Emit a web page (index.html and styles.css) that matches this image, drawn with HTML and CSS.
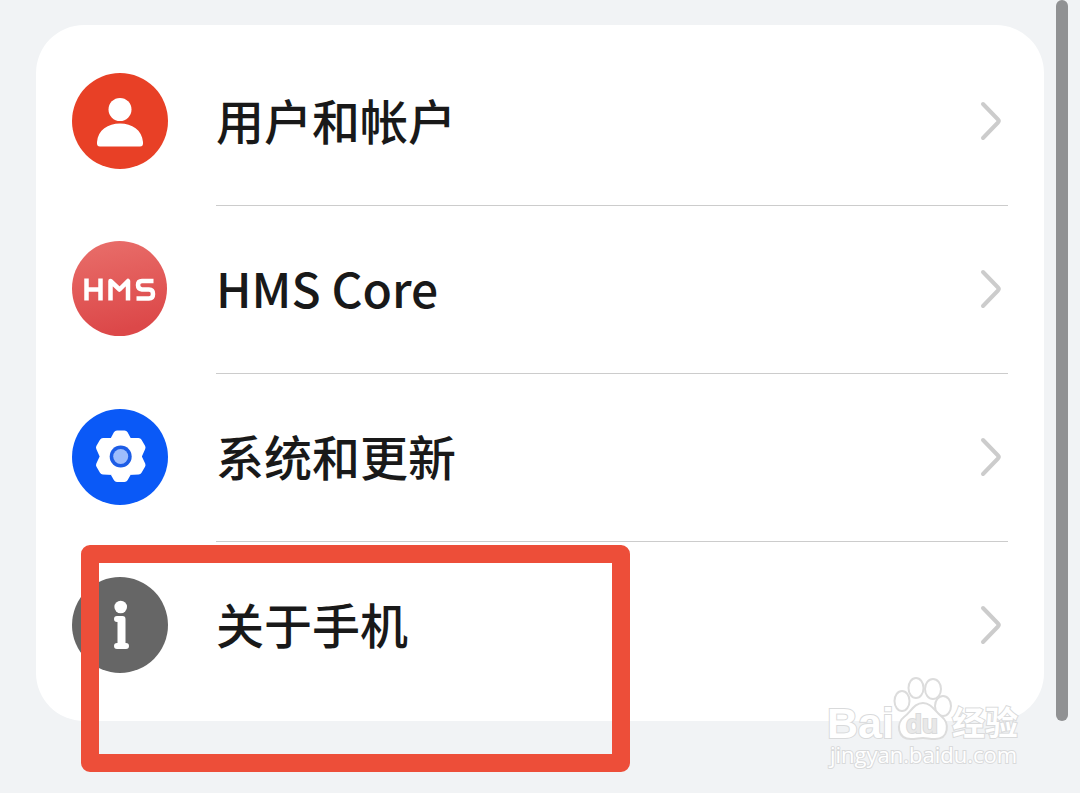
FILE: index.html
```html
<!DOCTYPE html>
<html lang="zh-CN">
<head>
    <meta charset="UTF-8">
    <meta name="viewport" content="width=device-width, initial-scale=1.0">
    <title>设置</title>
    <link rel="stylesheet" href="styles.css">
</head>
<body>
    <main class="page">
        <ul class="card">
            <li>
                <a class="row" href="#users">
                    <svg class="icon" viewBox="0 0 96 96" aria-hidden="true">
                        <circle cx="48" cy="48" r="48" fill="#e84026"/>
                        <circle cx="48" cy="36.500" r="11.500" fill="#fff"/>
                        <path d="M28 73.500Q24.500 73.500 25 69C26 57 36 50.500 48 50.500S70 57 71 69Q71.500 73.500 68 73.500Z" fill="#fff"/>
                    </svg>
                    <span class="label">用户和帐户</span>
                    <svg class="chevron" viewBox="0 0 24 42" aria-hidden="true"><path d="M4 4L19 19.500Q20.500 21 19 22.500L4 38"/></svg>
                </a>
            </li>
            <li>
                <a class="row" href="#hms">
                    <svg class="icon" viewBox="0 0 96 96" aria-hidden="true">
                        <defs>
                            <linearGradient id="hmsFill" x1="0" y1="0" x2="0.2" y2="1">
                                <stop offset="0" stop-color="#e96f6b"/>
                                <stop offset="1" stop-color="#dc4849"/>
                            </linearGradient>
                        </defs>
                        <circle cx="47.500" cy="47.500" r="47.500" fill="url(#hmsFill)"/>
                        <g fill="none" stroke="#fff" stroke-width="4.500">
                            <path d="M14.500 37.500V59.500M28.500 37.500V59.500M14 48.500H28"/>
                            <path d="M38.500 59.500V40L47.500 48.500L56 40V59.500" stroke-linejoin="round"/>
                            <path d="M81.500 40H70Q66 40 66 44T70 48.500H77Q81 48.500 81 53T77 57.500H64.500"/>
                        </g>
                    </svg>
                    <span class="label">HMS Core</span>
                    <svg class="chevron" viewBox="0 0 24 42" aria-hidden="true"><path d="M4 4L19 19.500Q20.500 21 19 22.500L4 38"/></svg>
                </a>
            </li>
            <li>
                <a class="row" href="#system">
                    <svg class="icon" viewBox="0 0 96 96" aria-hidden="true">
                        <circle cx="48" cy="48" r="48" fill="#0a59f7"/>
                        <path d="M45 25H52.500L56.500 32.500L66.500 32.500L70 38.500L66 47.500L70 56L66.500 62L56.500 62.500L52.500 69.500H45L41 62.500L31 62L27.500 56L31.500 47.500L27.500 38.500L31 32.500L41 32.500Z" fill="#fff" stroke="#fff" stroke-width="7" stroke-linejoin="round"/>
                        <circle cx="48.700" cy="47.500" r="11" fill="#1c5ce6"/>
                        <circle cx="48.700" cy="47.500" r="7.500" fill="#9dbcfc"/>
                    </svg>
                    <span class="label">系统和更新</span>
                    <svg class="chevron" viewBox="0 0 24 42" aria-hidden="true"><path d="M4 4L19 19.500Q20.500 21 19 22.500L4 38"/></svg>
                </a>
            </li>
            <li class="marked">
                <a class="row" href="#about">
                    <svg class="icon" viewBox="0 0 96 96" aria-hidden="true">
                        <circle cx="48" cy="48" r="48" fill="#666"/>
                        <circle cx="48.700" cy="30" r="6.300" fill="#fff"/>
                        <path d="M45 39H50.500Q53.500 39 53.500 42V66H54A3 3 0 0 1 54 72H45A3 3 0 0 1 45 66H45.500V45H45A3 3 0 0 1 45 39Z" fill="#fff"/>
                    </svg>
                    <span class="label">关于手机</span>
                    <svg class="chevron" viewBox="0 0 24 42" aria-hidden="true"><path d="M4 4L19 19.500Q20.500 21 19 22.500L4 38"/></svg>
                </a>
                <div class="highlight"></div>
            </li>
        </ul>
        <div class="scrollbar"></div>
        <svg class="watermark" viewBox="0 0 200 100" role="img" aria-label="Baidu 经验">
            <g class="paw">
                <ellipse cx="76" cy="28" rx="7.500" ry="10"/>
                <ellipse cx="90" cy="15" rx="7.500" ry="10"/>
                <ellipse cx="107" cy="16" rx="8" ry="10"/>
                <ellipse cx="117" cy="33" rx="8" ry="10"/>
                <path d="M97 30C105 30 109 38 115 43C124 50 123 66 109 66C103 66 101 65 97 65S90 66 85 66C71 66 70 50 78 44C85 39 88 30 97 30Z"/>
            </g>
            <text class="mark mark-bold" x="1" y="65" font-size="43">Bai</text>
            <text class="mark mark-du" x="80" y="60" font-size="26">du</text>
            <text class="mark mark-bold" x="126" y="62" font-size="33">经验</text>
            <text class="mark" x="4" y="90" font-size="22">jingyan.baidu.com</text>
        </svg>
    </main>
</body>
</html>
```

FILE: styles.css
```css
* {
    box-sizing: border-box;
}
body {
    margin: 0;
    background-color: #f1f3f5;
    color: #191919;
    font-family: "Noto Sans CJK SC", sans-serif;
}
.page {
    position: relative;
    min-height: 100vh;
    padding: 25px 36px 72px;
}
.card {
    margin: 0;
    padding: 12px 36px;
    list-style: none;
    background-color: #fff;
    border-radius: 48px;
}
.row {
    display: flex;
    align-items: center;
    height: 168px;
    color: inherit;
    text-decoration: none;
}
.icon {
    flex: none;
    width: 96px;
    height: 96px;
}
.label {
    flex: 1;
    margin-left: 48px;
    padding-bottom: 4px;
    font-size: 48px;
    font-weight: 500;
    line-height: 72px;
}
.chevron {
    flex: none;
    width: 24px;
    height: 42px;
    margin-right: 5px;
    fill: none;
    stroke: #ccc;
    stroke-width: 4;
    stroke-linecap: round;
}
li + li .row {
    background: linear-gradient(#ccc, #ccc) 144px 0 / 100% 1px no-repeat;
}
.marked {
    position: relative;
}
/* red frame round the last row */
.highlight {
    position: absolute;
    top: 4px;
    left: 9px;
    width: 549px;
    height: 227px;
    border: 18px solid #ed4e39;
    border-radius: 9px;
    pointer-events: none;
}
.scrollbar {
    position: absolute;
    top: 0;
    right: 12px;
    bottom: 72px;
    width: 12px;
    border-radius: 6px;
    background-color: #909193;
}
.watermark {
    position: absolute;
    right: 54px;
    bottom: 20px;
    width: 200px;
    height: 100px;
}
.paw {
    fill: #fff;
    stroke: #dcdcdc;
    stroke-width: 2;
}
.mark {
    fill: #fff;
    stroke: #d9dadb;
    stroke-width: 2;
    paint-order: stroke;
    font-family: "Open Sans", "Noto Sans CJK SC", sans-serif;
}
.mark-bold {
    font-family: "Liberation Sans", "Noto Sans CJK SC", sans-serif;
    font-weight: 700;
}
.mark-du {
    fill: #e8e8e8;
    font-family: "Liberation Sans", sans-serif;
    font-weight: 700;
}
```
